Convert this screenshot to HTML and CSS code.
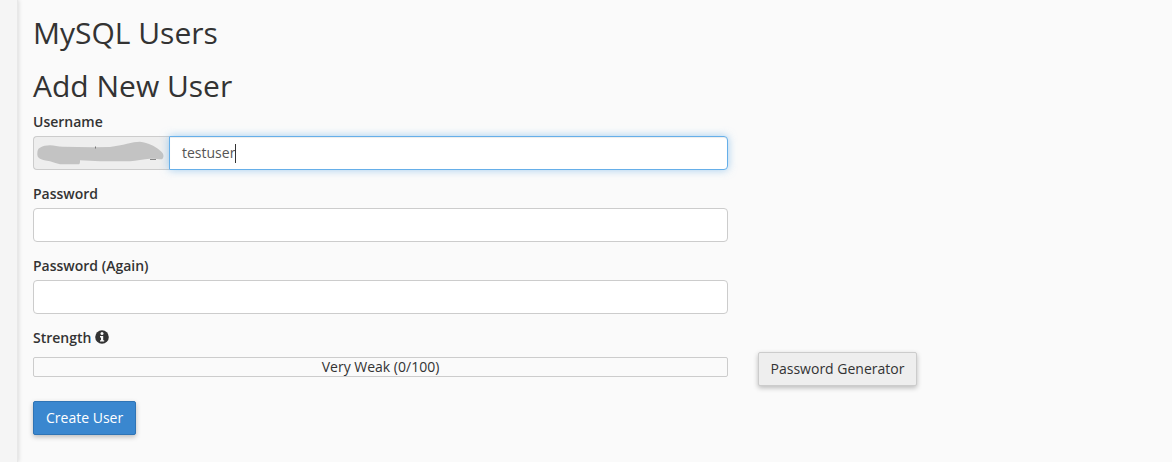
FILE: index.html
```html
<!DOCTYPE html>
<html lang="en">
<head>
    <meta charset="UTF-8">
    <meta name="viewport" content="width=device-width, initial-scale=1.0">
    <title>MySQL Users</title>
    <link rel="stylesheet" href="styles.css">
</head>
<body>
    <div class="sidebar"></div>
    <div class="content">
        <h1>MySQL Users</h1>
        <h2>Add New User</h2>
        <form class="user-form">
            <div class="field">
                <label>Username</label>
                <div class="input-group">
                    <span class="prefix">
                        <svg class="blur-mark" width="132" height="24" viewBox="0 0 132 24">
                            <path fill="#c3c3c3" d="M1.3 12.7 C1.5 9 2 7.5 4 6.7 C7 5 10 4.3 14 4.3 C18 4.5 22 5.7 27 5.7 L57 6.3 L74 6 C80 5 86 4 91 2.7 C96 1.5 100 .7 104 .7 C108 1 112 2.5 116 4.3 C120 6.5 125 9.5 127 12.7 C128 15 127.5 17.5 125.7 18.3 C122 18.3 118 17.4 114 17.7 C108 18 100 20 94 20.3 L64 20.3 L44 19.3 C44 21 44 23 43 23.3 L24 23.3 C20 22.5 17 21 14 20.3 C10 19.5 6 19 4 17.7 C2 16.5 1.2 15 1.3 12.7 Z"/>
                            <rect x="59" y="5.5" width="1" height="2" fill="#777"/>
                            <rect x="114" y="18" width="6" height="1" fill="#888"/>
                        </svg>
                    </span>
                    <div class="text-input focused">testuser<span class="caret"></span></div>
                </div>
            </div>
            <div class="field">
                <label>Password</label>
                <div class="text-input"></div>
            </div>
            <div class="field">
                <label>Password (Again)</label>
                <div class="text-input"></div>
            </div>
            <div class="field strength">
                <label>Strength
                    <svg class="info-icon" width="14" height="14" viewBox="0 0 14 14">
                        <circle cx="7" cy="7" r="6.8" fill="#333"/>
                        <circle cx="7" cy="3.6" r="1.5" fill="#fafafa"/>
                        <path fill="#fafafa" d="M5 6h3.2v4.2h1v1.4H5v-1.4h1V7.4H5z"/>
                    </svg>
                </label>
                <div class="strength-row">
                    <div class="meter">Very Weak (0/100)</div>
                    <button type="button" class="btn btn-generate">Password Generator</button>
                </div>
            </div>
            <button type="button" class="btn btn-primary">Create User</button>
        </form>
    </div>
</body>
</html>
```

FILE: styles.css
```css
* {
    box-sizing: border-box;
}

html, body {
    height: 100%;
}

body {
    margin: 0;
    display: flex;
    overflow: hidden;
    background-color: #fafafa;
    color: #333;
    font-family: "Open Sans", sans-serif;
    font-size: 14px;
    line-height: 20px;
}

.sidebar {
    width: 18px;
    flex: none;
    background-color: #f5f5f5;
    border-right: 1px solid #e8e8e8;
    box-shadow: 1px 0 4px rgba(0, 0, 0, 0.12);
}

.content {
    flex: 1;
    padding: 12px 0 0 15px;
}

h1, h2 {
    margin: 0;
    font-size: 30px;
    font-weight: 400;
    line-height: 41px;
}

h2 {
    margin-top: 12px;
}

.user-form {
    margin-top: 6px;
}

.field {
    width: 695px;
    margin-bottom: 14px;
}

.field label {
    display: block;
    height: 20px;
    margin-bottom: 4px;
    font-weight: 600;
}

.input-group {
    display: flex;
}

.prefix {
    width: 136px;
    height: 34px;
    flex: none;
    display: flex;
    align-items: center;
    padding-left: 2px;
    background-color: #eee;
    border: 1px solid #ccc;
    border-right: 0;
    border-radius: 4px 0 0 4px;
}

.text-input {
    width: 100%;
    height: 34px;
    padding: 6px 12px;
    background-color: #fff;
    border: 1px solid #ccc;
    border-radius: 4px;
    color: #555;
}

.text-input.focused {
    display: flex;
    align-items: center;
    border-color: #66afe9;
    border-radius: 0 4px 4px 0;
    box-shadow: inset 0 1px 1px rgba(0, 0, 0, 0.075), 0 0 8px rgba(102, 175, 233, 0.6);
}

.caret {
    width: 1px;
    height: 19px;
    background-color: #333;
}

.strength {
    width: 884px;
    margin-bottom: 15px;
}

.info-icon {
    vertical-align: -1px;
}

.strength-row {
    display: flex;
    align-items: flex-start;
    gap: 30px;
}

.meter {
    width: 695px;
    height: 20px;
    flex: none;
    margin-top: 5px;
    background-color: #fafafa;
    border: 1px solid #ccc;
    border-radius: 2px;
    text-align: center;
    line-height: 18px;
}

.btn {
    height: 34px;
    padding: 6px 12px;
    background-color: #eee;
    border: 1px solid #ccc;
    border-radius: 2px;
    box-shadow: 0 2px 5px rgba(0, 0, 0, 0.25);
    color: #333;
    font-family: inherit;
    font-size: 14px;
    line-height: 20px;
    white-space: nowrap;
    cursor: pointer;
}

.btn-generate {
    width: 159px;
    padding: 6px 0;
}

.btn-primary {
    display: block;
    background-color: #3a87cf;
    border-color: #2f74b5;
    color: #fff;
}
```
